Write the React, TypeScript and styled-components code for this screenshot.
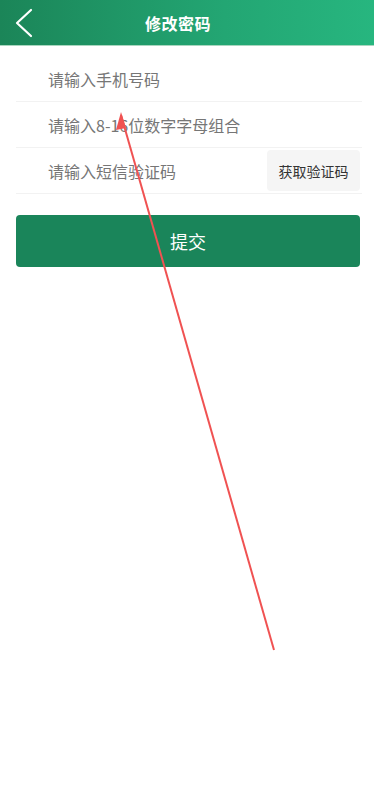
import * as React from 'react';
import styled, { createGlobalStyle } from 'styled-components';

const Global = createGlobalStyle`
    html, body {
        margin: 0;
        padding: 0;
        background: #ffffff;
        font-family: "Noto Sans CJK SC", "Noto Sans", sans-serif;
    }
`;

const Page = styled.div`
    position: relative;
    width: 374px;
    height: 800px;
    background: #ffffff;
    overflow: hidden;
`;

const Header = styled.header`
    height: 45px;
    display: flex;
    align-items: center;
    justify-content: center;
    position: relative;
    padding-right: 18px;
    background: linear-gradient(90deg, #1b8558 0%, #23a673 60%, #27b67f 100%);
    border-bottom: 1px solid #a9d6bf;
`;

const Back = styled.div`
    position: absolute;
    left: 12px;
    top: 8px;
    width: 26px;
    height: 30px;
    display: flex;
    align-items: center;
    justify-content: center;
`;

const Title = styled.h1`
    margin: 0;
    font-size: 16px;
    font-weight: 700;
    color: #ffffff;
    letter-spacing: 0.5px;
`;

const Form = styled.div`
    padding: 10px 12px 0 16px;
    display: flex;
    flex-direction: column;
`;

const Row = styled.div`
    height: 45px;
    display: flex;
    align-items: center;
    justify-content: space-between;
    border-bottom: 1px solid #f2f2f2;
`;

const Field = styled.input`
    flex: 1;
    border: none;
    outline: none;
    background: transparent;
    padding: 0 0 0 32px;
    font-size: 16px;
    color: #333;
    font-family: "Noto Sans CJK SC", "Noto Sans", sans-serif;
    &::placeholder {
        color: #767676;
    }
`;

const CodeBtn = styled.button`
    width: 93px;
    height: 41px;
    margin-right: 2px;
    border: none;
    border-radius: 4px;
    background: #f5f5f5;
    color: #333;
    font-size: 14px;
    font-family: "Noto Sans CJK SC", "Noto Sans", sans-serif;
    padding: 0;
`;

const Submit = styled.button`
    margin: 21px 14px 0 16px;
    height: 52px;
    border: none;
    border-radius: 4px;
    background: #1a855a;
    color: #ffffff;
    font-size: 18px;
    font-family: "Noto Sans CJK SC", "Noto Sans", sans-serif;
    width: calc(100% - 30px);
`;

const Overlay = styled.svg`
    position: absolute;
    left: 0;
    top: 0;
    pointer-events: none;
`;

function App() {
    return (
        <Page>
            <Global />
            <Header>
                <Back>
                    <svg width="26" height="30" viewBox="0 0 26 30">
                        <polyline points="19,2 5,15 19,28" fill="none" stroke="#fff" strokeWidth="2.2" strokeLinecap="round" strokeLinejoin="round" />
                    </svg>
                </Back>
                <Title>修改密码</Title>
            </Header>
            <Form>
                <Row>
                    <Field placeholder="请输入手机号码" />
                </Row>
                <Row>
                    <Field placeholder="请输入8-16位数字字母组合" />
                </Row>
                <Row>
                    <Field placeholder="请输入短信验证码" />
                    <CodeBtn>获取验证码</CodeBtn>
                </Row>
            </Form>
            <Submit>提交</Submit>
            <Overlay width="374" height="800" viewBox="0 0 374 800">
                <line x1="121" y1="115" x2="274" y2="650" stroke="#f05252" strokeWidth="2" />
                <polygon points="121,112 116,130 126,128" fill="#f05252" />
            </Overlay>
        </Page>
    );
}

export default App;
